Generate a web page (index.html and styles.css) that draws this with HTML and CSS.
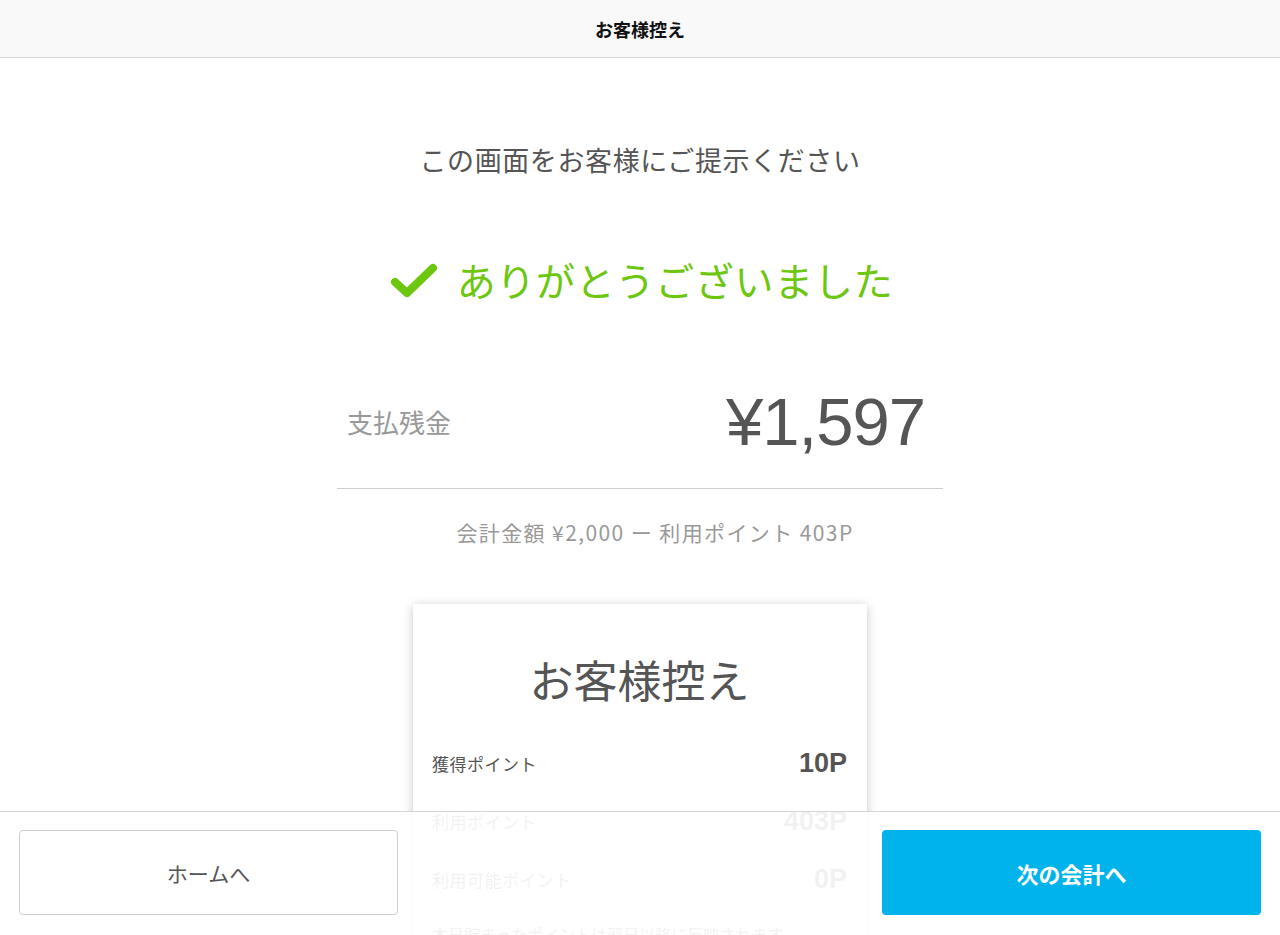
FILE: index.html
```html
<!DOCTYPE html>
<html lang="ja">
<head>
<meta charset="utf-8">
<title>お客様控え</title>
<link rel="stylesheet" href="styles.css">
</head>
<body>
<div class="page">
  <header class="topbar">
    <h1 class="topbar-title">お客様控え</h1>
  </header>
  <main class="main">
    <p class="intro">この画面をお客様にご提示ください</p>
    <div class="thanks">
      <svg class="check" width="52" height="40" viewBox="0 0 52 40" aria-hidden="true">
        <path d="M8 23 L20 34 L46 9" fill="none" stroke="#6cc70e" stroke-width="8" stroke-linecap="round" stroke-linejoin="round"/>
      </svg>
      <span class="thanks-text">ありがとうございました</span>
    </div>
    <div class="balance">
      <span class="balance-label">支払残金</span>
      <span class="balance-amount">¥1,597</span>
    </div>
    <p class="summary">会計金額 ¥2,000 ー 利用ポイント 403P</p>
    <section class="card">
      <h2 class="card-title">お客様控え</h2>
      <div class="card-row">
        <span class="row-label">獲得ポイント</span>
        <span class="row-value">10P</span>
      </div>
      <div class="card-row">
        <span class="row-label">利用ポイント</span>
        <span class="row-value">403P</span>
      </div>
      <div class="card-row">
        <span class="row-label">利用可能ポイント</span>
        <span class="row-value">0P</span>
      </div>
      <p class="card-note">本日貯まったポイントは翌日以降に反映されます</p>
    </section>
  </main>
  <footer class="bottombar">
    <button class="btn btn-outline" type="button">ホームへ</button>
    <button class="btn btn-primary" type="button">次の会計へ</button>
  </footer>
</div>
</body>
</html>
```
FILE: styles.css
```css
html, body {
  margin: 0;
  padding: 0;
  height: 100%;
  overflow: hidden;
  background: #ffffff;
}

body {
  font-family: "Noto Sans CJK JP", "Noto Sans", sans-serif;
  color: #555555;
}

.page {
  position: relative;
  height: 100vh;
  overflow: hidden;
}

.topbar {
  height: 57px;
  background: #f9f9f9;
  border-bottom: 1px solid #d6d6d6;
  display: flex;
  align-items: center;
  justify-content: center;
}

.topbar-title {
  margin: 0;
  font-size: 18px;
  font-weight: 700;
  color: #111111;
  line-height: 24px;
}

.main {
  display: flex;
  flex-direction: column;
  align-items: center;
}

.intro {
  margin: 84px 0 0;
  font-size: 27px;
  line-height: 36px;
  letter-spacing: 0.6px;
  color: #555555;
}

.thanks {
  margin-top: 76px;
  height: 50px;
  display: flex;
  align-items: center;
  gap: 18px;
}

.check {
  display: block;
}

.thanks-text {
  font-size: 39px;
  line-height: 50px;
  color: #6cc70e;
  letter-spacing: 0.7px;
}

.balance {
  margin-top: 78px;
  width: 578px;
  padding: 0 18px 26px 10px;
  height: 80px;
  border-bottom: 1px solid #cfcfcf;
  display: flex;
  align-items: center;
  justify-content: space-between;
}

.balance-label {
  font-size: 26px;
  color: #999999;
  line-height: 36px;
}

.balance-amount {
  font-family: "Liberation Sans", "Noto Sans CJK JP", sans-serif;
  font-size: 67px;
  line-height: 80px;
  color: #555555;
  letter-spacing: -1px;
}

.summary {
  margin: 29px 0 0;
  padding-left: 30px;
  font-size: 21px;
  line-height: 28px;
  letter-spacing: 1.4px;
  color: #999999;
}

.card {
  margin-top: 58px;
  width: 454px;
  box-sizing: border-box;
  padding: 45px 20px 20px 19px;
  background: #ffffff;
  box-shadow: 0 2px 10px rgba(0, 0, 0, 0.22);
}

.card-title {
  margin: 0 0 25px;
  text-align: center;
  font-size: 44px;
  line-height: 60px;
  font-weight: 400;
  color: #555555;
}

.card-row {
  height: 58px;
  display: flex;
  align-items: center;
  justify-content: space-between;
}

.row-label {
  font-size: 17px;
  letter-spacing: 0.5px;
  color: #555555;
}

.row-value {
  font-family: "Liberation Sans", "Noto Sans CJK JP", sans-serif;
  font-size: 27px;
  font-weight: 700;
  color: #555555;
}

.card-note {
  margin: 14px 0 0;
  font-size: 16px;
  line-height: 24px;
  color: #555555;
}

.bottombar {
  position: absolute;
  left: 0;
  right: 0;
  bottom: 0;
  height: 105px;
  padding: 18px 19px 0;
  border-top: 1px solid #d6d6d6;
  background: rgba(255, 255, 255, 0.92);
  display: flex;
  justify-content: space-between;
  align-items: flex-start;
}

.btn {
  width: 379px;
  height: 85px;
  border-radius: 4px;
  font-family: "Noto Sans CJK JP", "Noto Sans", sans-serif;
  font-size: 21px;
  cursor: pointer;
}

.btn-outline {
  background: #ffffff;
  border: 1px solid #cfcfcf;
  color: #555555;
}

.btn-primary {
  background: #00b3eb;
  border: none;
  color: #ffffff;
  font-size: 22px;
  font-weight: 700;
}
```
